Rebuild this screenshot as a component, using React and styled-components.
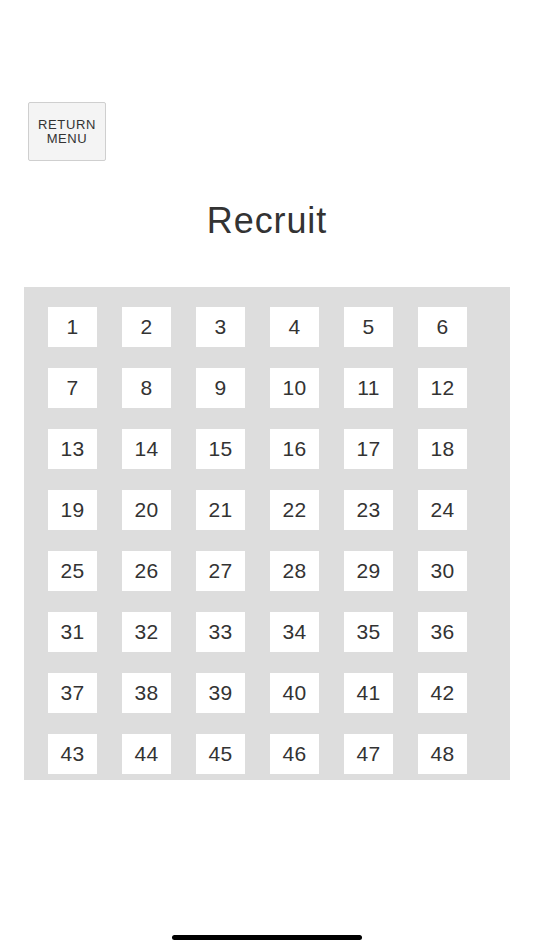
import React from "react";
import styled, { createGlobalStyle } from "styled-components";

const Global = createGlobalStyle`
  html, body { margin: 0; padding: 0; background: #ffffff; }
  body { font-family: "Liberation Sans", Arial, sans-serif; }
`;

const Page = styled.div`
  width: 534px;
  height: 950px;
  position: relative;
  display: flex;
  flex-direction: column;
  box-sizing: border-box;
  padding-top: 102px;
`;

const TopBar = styled.div`
  display: flex;
  padding-left: 28px;
`;

const ReturnButton = styled.button`
  width: 78px;
  height: 59px;
  box-sizing: border-box;
  background: #f4f4f4;
  border: 1px solid #cfcfcf;
  border-radius: 2px;
  color: #333333;
  font-family: "Liberation Sans", Arial, sans-serif;
  font-size: 13px;
  line-height: 14px;
  letter-spacing: 0.6px;
  padding: 0;
  display: flex;
  flex-direction: column;
  align-items: center;
  justify-content: center;
  text-align: center;
`;

const ButtonLine = styled.span`
  display: block;
  line-height: 14px;
`;

const Title = styled.h1`
  margin: 38px 0 0;
  text-align: center;
  font-weight: normal;
  font-size: 36px;
  line-height: 44px;
  color: #333333;
  letter-spacing: 0.9px;
`;

const Panel = styled.div`
  margin: 44px 0 0 24px;
  width: 486px;
  box-sizing: border-box;
  background: #dddddd;
  padding: 20px 0 6px 24px;
  display: grid;
  grid-template-columns: repeat(6, 49px);
  column-gap: 25px;
  row-gap: 21px;
`;

const Cell = styled.div`
  width: 49px;
  height: 40px;
  background: #ffffff;
  display: flex;
  align-items: center;
  justify-content: center;
  font-size: 21px;
  letter-spacing: 0.3px;
  color: #333333;
`;

const HomeIndicator = styled.div`
  position: absolute;
  left: 172px;
  top: 935px;
  width: 190px;
  height: 5px;
  border-radius: 3px;
  background: #000000;
`;

export default function App() {
  const nums = Array.from({ length: 48 }, (_, i) => i + 1);
  return (
    <>
      <Global />
      <Page>
        <TopBar>
          <ReturnButton>
            <ButtonLine>RETURN</ButtonLine>
            <ButtonLine>MENU</ButtonLine>
          </ReturnButton>
        </TopBar>
        <Title>Recruit</Title>
        <Panel>
          {nums.map((n) => (
            <Cell key={n}>{n}</Cell>
          ))}
        </Panel>
        <HomeIndicator />
      </Page>
    </>
  );
}
